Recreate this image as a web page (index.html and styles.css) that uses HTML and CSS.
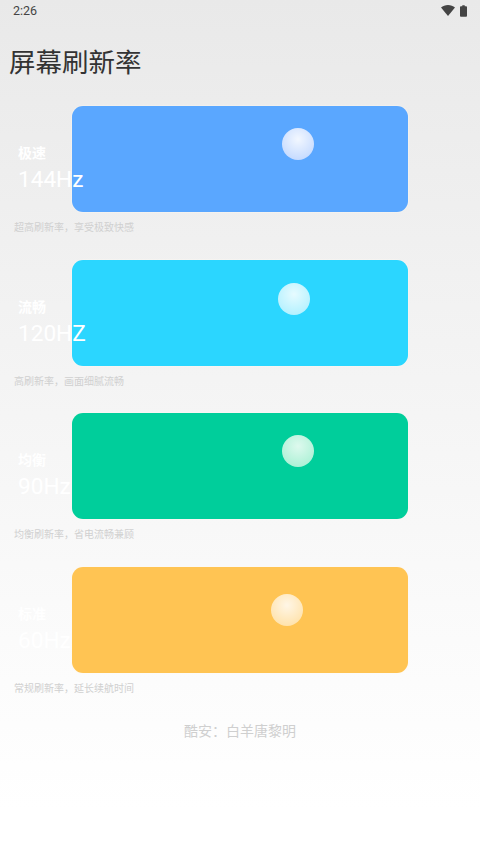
FILE: index.html
```html
<!DOCTYPE html>
<html lang="zh-CN">

<head>
    <meta charset="UTF-8">
    <meta name="viewport" content="width=device-width, initial-scale=1.0">

    <link rel="stylesheet" href="styles.css">
</head>

<body>
    <div class="status-bar">
        <span class="status-time">2:26</span>
        <div class="status-icons">
            <svg class="icon-wifi" viewBox="0 0 14 11">
                <path d="M0 2.6C1.9 1 4.3 0 7 0s5.100 1 7 2.600L7 11z" fill="#444"/>
            </svg>
            <svg class="icon-battery" viewBox="0 0 8 13">
                <path d="M2.600 0h2.800v1.200H7a1 1 0 0 1 1 1V12a1 1 0 0 1-1 1H1a1 1 0 0 1-1-1V2.200a1 1 0 0 1 1-1h1.600z" fill="#444"/>
            </svg>
        </div>
    </div>

    <h1 class="page-title">屏幕刷新率</h1>

    <div class="mode-list">
        <div class="mode mode-fast">
            <div class="card"><span class="ball"></span></div>
            <div class="mode-label">
                <div class="mode-name">极速</div>
                <div class="mode-rate">144Hz</div>
            </div>
            <div class="mode-desc">超高刷新率，享受极致快感</div>
        </div>

        <div class="mode mode-smooth">
            <div class="card"><span class="ball"></span></div>
            <div class="mode-label">
                <div class="mode-name">流畅</div>
                <div class="mode-rate">120HZ</div>
            </div>
            <div class="mode-desc">高刷新率，画面细腻流畅</div>
        </div>

        <div class="mode mode-balance">
            <div class="card"><span class="ball"></span></div>
            <div class="mode-label">
                <div class="mode-name">均衡</div>
                <div class="mode-rate">90Hz</div>
            </div>
            <div class="mode-desc">均衡刷新率，省电流畅兼顾</div>
        </div>

        <div class="mode mode-saver">
            <div class="card"><span class="ball"></span></div>
            <div class="mode-label">
                <div class="mode-name">标准</div>
                <div class="mode-rate">60Hz</div>
            </div>
            <div class="mode-desc">常规刷新率，延长续航时间</div>
        </div>
    </div>

    <div class="footer-text">酷安：白羊唐黎明</div>
</body>

</html>
```

FILE: styles.css
```css
* {
    margin: 0;
    padding: 0;
    box-sizing: border-box;
}

body {
    width: 480px;
    height: 852px;
    overflow: hidden;
    font-family: Roboto, "Noto Sans CJK SC", sans-serif;
    background: linear-gradient(180deg, #e9e9e9 0%, #f3f3f3 40%, #fbfbfb 75%, #ffffff 95%);
}

.status-bar {
    display: flex;
    justify-content: space-between;
    align-items: center;
    height: 21px;
    padding: 0 13px;
}

.status-time {
    font-size: 12.500px;
    color: #444;
}

.status-icons {
    display: flex;
    align-items: center;
    gap: 5px;
}

.icon-wifi {
    width: 14px;
    height: 11px;
}

.icon-battery {
    width: 7px;
    height: 12px;
}

.page-title {
    margin: 25px 0 26px 9px;
    font-size: 26.500px;
    line-height: 34px;
    font-weight: 400;
    color: #333;
}

.mode-list {
    display: flex;
    flex-direction: column;
}

.mode {
    position: relative;
    height: 153.670px;
    padding: 0 72px;
}

.card {
    position: relative;
    height: 106px;
    background: var(--card-color);
    border-radius: 11px;
    box-shadow: 0 0 0 1px rgba(255, 250, 240, 0.35);
}

.mode-fast {
    --card-color: #5aa7ff;
    --ball-x: 210px;
    --ball-y: 22px;
    --ball-core: #f2f7ff;
    --ball-tint: #c6dbff;
    --ball-rim: #dbe8ff;
}

.mode-smooth {
    --card-color: #2bd6ff;
    --ball-x: 206px;
    --ball-y: 23px;
    --ball-tint: #b4f1ff;
    --ball-core: #e6fbff;
    --ball-rim: #cff7ff;
}

.mode-balance {
    --card-color: #00ce9b;
    --ball-x: 210px;
    --ball-y: 22px;
    --ball-core: #def9ee;
    --ball-tint: #adf1d6;
    --ball-rim: #c2f6cc;
}

.mode-saver {
    --card-color: #ffc453;
    --ball-x: 199px;
    --ball-y: 27px;
    --ball-core: #fff6e6;
    --ball-tint: #ffe3ad;
    --ball-rim: #ffedc8;
}

.ball {
    position: absolute;
    left: var(--ball-x);
    top: var(--ball-y);
    width: 32px;
    height: 32px;
    border-radius: 50%;
    background: radial-gradient(circle at 50% 35%, var(--ball-core) 0%, var(--ball-tint) 78%, var(--ball-rim) 100%);
}

.mode-label {
    position: absolute;
    left: 18px;
    top: 37px;
    color: #fff;
}

.mode-name {
    font-size: 14px;
    line-height: 20px;
    font-weight: 700;
}

.mode-rate {
    font-size: 22.600px;
    line-height: 34px;
}

.mode-desc {
    margin: 9px 0 0 -58px;
    font-size: 10px;
    line-height: 14px;
    color: #d0d0d0;
}

.footer-text {
    text-align: center;
    font-size: 14px;
    line-height: 20px;
    color: #cfcfcf;
}
```
